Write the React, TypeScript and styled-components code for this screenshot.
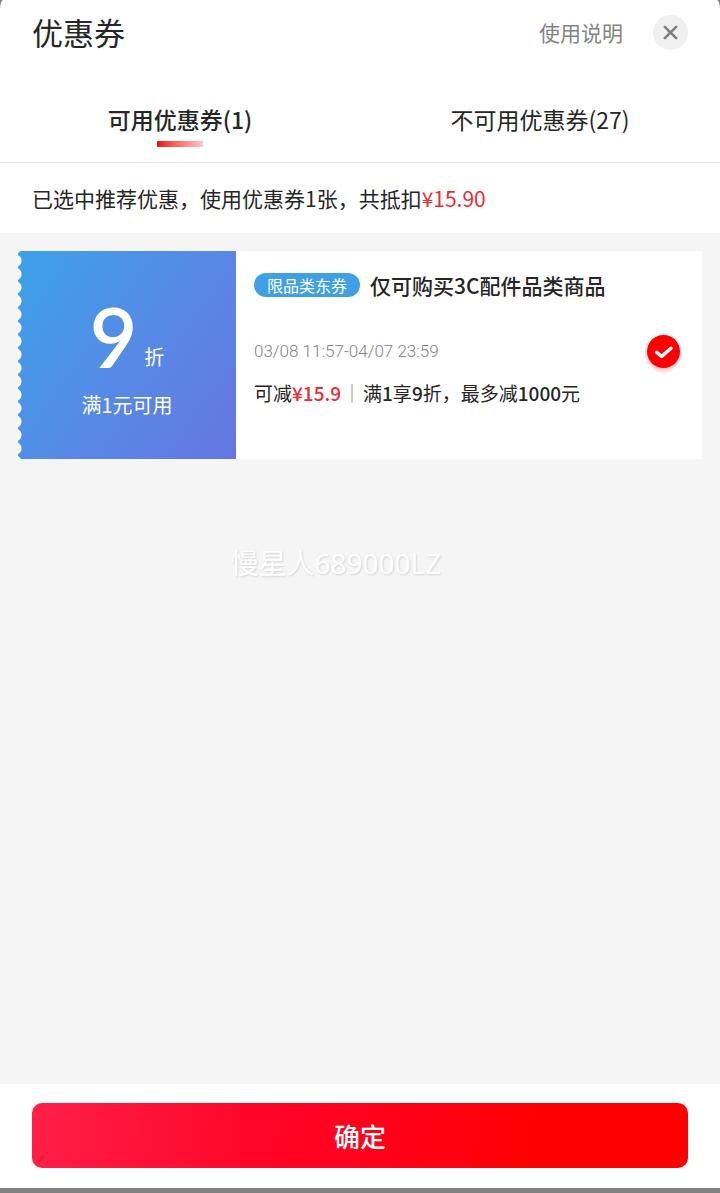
import React, { useState } from "react";
import styled, { createGlobalStyle } from "styled-components";

const GlobalStyle = createGlobalStyle`
  *, *::before, *::after { box-sizing: border-box; }
  body {
    margin: 0;
    background: #808080;
    color: #262626;
    font-family: "Noto Sans CJK SC", "Noto Sans", sans-serif;
  }
  button { font-family: inherit; border: 0; padding: 0; background: none; color: inherit; cursor: pointer; }
`;

const Page = styled.div`
  min-height: 100vh;
  display: flex;
  flex-direction: column;
  padding-bottom: 5px;
`;

const Sheet = styled.section`
  flex: 1;
  display: flex;
  flex-direction: column;
  background: #fff;
  border-radius: 3px 3px 0 0 / 10px 10px 0 0;
  overflow: hidden;
`;

const Header = styled.header`
  display: flex;
  align-items: center;
  height: 64px;
  padding: 0 32px;
`;

const Title = styled.h1`
  flex: 1;
  margin: 0;
  font-size: 31px;
  line-height: 40px;
  font-weight: 400;
`;

const HelpLink = styled.a`
  margin-right: 30px;
  color: #848484;
  font-size: 21px;
  line-height: 28px;
  text-decoration: none;
`;

const CloseButton = styled.button`
  display: flex;
  align-items: center;
  justify-content: center;
  width: 35px;
  height: 35px;
  border-radius: 50%;
  background: #f0f0f0;
`;

const Tabs = styled.div`
  display: flex;
  border-bottom: 1px solid #e6e6e6;
`;

const Tab = styled.button<{ $active: boolean }>`
  flex: 1;
  display: flex;
  flex-direction: column;
  align-items: center;
  gap: 8px;
  padding: 41px 0 15px;
  font-size: 23px;
  line-height: 28px;
  font-weight: ${(p) => (p.$active ? 500 : 400)};

  &::after {
    content: "";
    width: 46px;
    height: 6px;
    background: ${(p) => (p.$active ? "linear-gradient(90deg, #e81010 0, #f0302c 6px, #f9645e 18px, #fcc8c8 100%)" : "none")};
  }
`;

const Summary = styled.p`
  margin: 0;
  padding: 21px 32px;
  font-size: 21px;
  line-height: 28px;
`;

const Price = styled.span`
  color: #ee2b34;
`;

const Body = styled.main`
  position: relative;
  flex: 1;
  padding: 18px;
  background: #f5f5f5;
`;

const Coupon = styled.label`
  display: flex;
  min-height: 208px;
  background: #fff;
  cursor: pointer;
`;

const Stub = styled.div`
  flex: none;
  display: flex;
  flex-direction: column;
  align-items: center;
  width: 218px;
  padding-top: 42px;
  color: #fff;
  background:
    radial-gradient(circle at -3px 50%, #fbfbfb 6px, transparent 7px) 0 3px / 6px calc(100% * 2 / 31) repeat-y,
    linear-gradient(125deg, #3ca2e8 0%, #4a95e7 28%, #5a86e5 60%, #6576e2 100%);
`;

const Discount = styled.div`
  display: flex;
  align-items: flex-end;
  gap: 7px;
`;

const DiscountValue = styled.span`
  font-family: Lato, sans-serif;
  font-size: 82px;
  line-height: 86px;
  font-weight: 600;
`;

const DiscountUnit = styled.span`
  margin-bottom: 8px;
  font-size: 20px;
  line-height: 28px;
`;

const Condition = styled.div`
  margin-top: 12px;
  font-size: 20px;
  line-height: 28px;
`;

const Details = styled.div`
  flex: 1;
  display: flex;
  align-items: center;
  padding: 20px 22px 28px 18px;
`;

const Info = styled.div`
  flex: 1;
  align-self: flex-start;
`;

const NameRow = styled.div`
  display: flex;
  align-items: center;
  gap: 10px;
`;

const Tag = styled.span`
  padding: 0 13px;
  border-radius: 12px;
  background: #3fa0e6;
  color: #fff;
  font-size: 16px;
  line-height: 24px;
`;

const Name = styled.span`
  font-size: 21px;
  line-height: 28px;
  font-weight: 500;
`;

const Period = styled.div`
  margin-top: 40px;
  color: #848484;
  font-family: Roboto, "Noto Sans CJK SC", sans-serif;
  font-size: 17px;
  font-weight: 300;
  line-height: 24px;
`;

const Terms = styled.div`
  display: flex;
  align-items: center;
  margin-top: 16px;
  font-size: 19px;
  line-height: 28px;

  b { font-weight: 500; }
`;

const Saving = styled.b`
  color: #ee2b34;
`;

const Rule = styled.i`
  width: 2px;
  height: 19px;
  margin: 0 10px;
  background: #cccccc;
`;

const Check = styled.span`
  position: relative;
  display: flex;
  width: 33px;
  height: 33px;

  svg {
    position: absolute;
    inset: 0;
    pointer-events: none;
  }
`;

const CheckInput = styled.input`
  appearance: none;
  width: 33px;
  height: 33px;
  margin: 0;
  border: 2px solid #ccc;
  border-radius: 50%;

  &:checked {
    border: 0;
    background: #fb0000;
    box-shadow: 0 2px 5px rgba(251, 0, 0, 0.35);
  }
`;

const Watermark = styled.span`
  position: absolute;
  top: 310px;
  left: 32%;
  color: #fff;
  font-family: "Noto Sans", "Noto Sans CJK SC", sans-serif;
  font-size: 28px;
  line-height: 40px;
  text-shadow: 1px 1px 2px rgba(0, 0, 0, 0.14);
`;

const Footer = styled.footer`
  padding: 19px 32px 20px;
`;

const Confirm = styled.button`
  display: block;
  width: 100%;
  height: 65px;
  border-radius: 10px;
  background: linear-gradient(95deg, #ff1f48 0%, #ff0528 35%, #ff0014 60%, #ff0000 78%);
  color: #fff;
  font-size: 26px;
  line-height: 40px;
  font-weight: 500;
`;

export default function App() {
  const [tab, setTab] = useState(0);
  const [selected, setSelected] = useState(true);

  return (
    <Page>
      <GlobalStyle />
      <Sheet>
        <Header>
          <Title>优惠券</Title>
          <HelpLink href="#help">使用说明</HelpLink>
          <CloseButton aria-label="关闭">
            <svg width="15" height="15" viewBox="0 0 15 15" fill="none" stroke="#808080" strokeWidth="2.6" strokeLinecap="round">
              <path d="M1.8 1.8 13.2 13.2M13.2 1.8 1.8 13.2" />
            </svg>
          </CloseButton>
        </Header>
        <Tabs role="tablist">
          {["可用优惠券(1)", "不可用优惠券(27)"].map((label, i) => (
            <Tab key={label} role="tab" aria-selected={tab === i} $active={tab === i} onClick={() => setTab(i)}>
              {label}
            </Tab>
          ))}
        </Tabs>
        <Summary>
          已选中推荐优惠，使用优惠券1张，共抵扣<Price>¥15.90</Price>
        </Summary>
        <Body>
          <Coupon>
            <Stub>
              <Discount>
                <DiscountValue>9</DiscountValue>
                <DiscountUnit>折</DiscountUnit>
              </Discount>
              <Condition>满1元可用</Condition>
            </Stub>
            <Details>
              <Info>
                <NameRow>
                  <Tag>限品类东券</Tag>
                  <Name>仅可购买3C配件品类商品</Name>
                </NameRow>
                <Period>03/08 11:57-04/07 23:59</Period>
                <Terms>
                  可减<Saving>¥15.9</Saving>
                  <Rule />
                  <span>满<b>1</b>享<b>9</b>折，最多减<b>1000</b>元</span>
                </Terms>
              </Info>
              <Check>
                <CheckInput type="checkbox" checked={selected} onChange={(e) => setSelected(e.target.checked)} />
                {selected && (
                  <svg viewBox="0 0 33 33" fill="none" stroke="#fff" strokeWidth="3.4" strokeLinecap="round" strokeLinejoin="round">
                    <path d="M9.5 17.3 14.6 21.4 24 13.2" />
                  </svg>
                )}
              </Check>
            </Details>
          </Coupon>
          <Watermark>慢星人689000LZ</Watermark>
        </Body>
        <Footer>
          <Confirm>确定</Confirm>
        </Footer>
      </Sheet>
    </Page>
  );
}
